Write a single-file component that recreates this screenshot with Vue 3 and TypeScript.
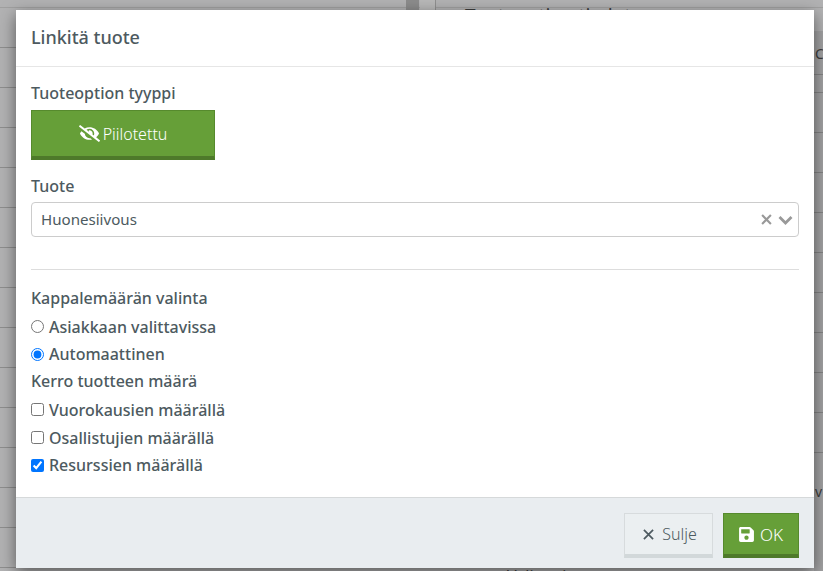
<script setup lang="ts">
const leftLines = [47, 87, 127, 167, 207, 247, 287, 327, 367, 407, 447, 487, 527, 567]
const rightLines = [74, 92, 132, 172, 212, 252, 292, 332, 372, 412, 452]
</script>

<template>
  <div class="page">
    <div class="backdrop" aria-hidden="true">
      <i class="top-line"></i>
      <i class="top-block"></i>
      <i class="top-block-light"></i>
      <i class="top-vline"></i>
      <i class="right-band"></i>
      <i v-for="y in leftLines" :key="y" class="left-line" :style="{ top: y + 'px' }"></i>
      <i v-for="y in rightLines" :key="'r' + y" class="right-line" :style="{ top: y + 'px' }"></i>
      <span class="behind b1">Tuoteoption tiedot</span>
      <span class="behind b2">Ca</span>
      <span class="behind b3">v</span>
      <span class="behind b4">Valinnainen</span>
    </div>
    <section class="modal">
      <header class="modal-head">
        <h2>Linkitä tuote</h2>
      </header>
      <div class="modal-body">
        <label class="label">Tuoteoption tyyppi</label>
        <button class="btn btn-green btn-type">
          <svg class="eye" viewBox="0 0 640 512" width="21" height="17"><path fill="currentColor" d="M320 400c-75.85 0-137.25-58.71-142.9-133.11L72.2 185.82c-13.79 17.3-26.48 35.59-36.72 55.59a32.35 32.35 0 0 0 0 29.19C89.71 376.41 197.07 448 320 448c26.91 0 52.87-4 77.89-10.46L346 397.39a144.13 144.13 0 0 1-26 2.61zm313.82 58.1l-110.55-85.44a331.25 331.25 0 0 0 81.25-102.07 32.35 32.35 0 0 0 0-29.19C550.29 135.59 442.93 64 320 64a308.15 308.15 0 0 0-147.32 37.7L45.46 3.37A16 16 0 0 0 23 6.18L3.37 31.45A16 16 0 0 0 6.18 53.9l588.36 454.73a16 16 0 0 0 22.46-2.81l19.64-25.27a16 16 0 0 0-2.82-22.45zm-183.72-142l-39.3-30.38A94.75 94.75 0 0 0 416 256a94.76 94.76 0 0 0-121.31-92.21A47.65 47.65 0 0 1 304 192a46.64 46.64 0 0 1-1.54 10l-73.61-56.89A142.31 142.31 0 0 1 320 112a143.92 143.92 0 0 1 144 144c0 21.63-5.29 41.79-13.9 60.11z"/></svg>
          <span>Piilotettu</span>
        </button>
        <label class="label label-product">Tuote</label>
        <div class="select">
          <span class="select-value">Huonesiivous</span>
          <span class="select-clear">
            <svg viewBox="0 0 12 12" width="11" height="11"><path d="M1.2 1.2l9.6 9.6M10.8 1.2l-9.6 9.6" stroke="currentColor" stroke-width="2.3" fill="none"/></svg>
          </span>
          <span class="select-arrow">
            <svg viewBox="0 0 15 10" width="15" height="10"><path d="M1.5 2L7.5 8l6-6" stroke="currentColor" stroke-width="2.8" fill="none"/></svg>
          </span>
        </div>
        <hr class="divider" />
        <div class="label row-label">Kappalemäärän valinta</div>
        <label class="check"><input type="radio" name="qty" /> <span>Asiakkaan valittavissa</span></label>
        <label class="check"><input type="radio" name="qty" checked /> <span>Automaattinen</span></label>
        <div class="label row-label">Kerro tuotteen määrä</div>
        <label class="check"><input type="checkbox" /> <span>Vuorokausien määrällä</span></label>
        <label class="check"><input type="checkbox" /> <span>Osallistujien määrällä</span></label>
        <label class="check"><input type="checkbox" checked /> <span>Resurssien määrällä</span></label>
      </div>
      <footer class="modal-foot">
        <button class="btn btn-light">
          <svg viewBox="0 0 12 12" width="11" height="11"><path d="M1 1l10 10M11 1L1 11" stroke="currentColor" stroke-width="1.9" fill="none"/></svg>
          <span>Sulje</span>
        </button>
        <button class="btn btn-green btn-ok">
          <svg viewBox="0 0 448 512" width="15" height="17"><path fill="currentColor" d="M433.94 129.94l-83.88-83.88A48 48 0 0 0 316.12 32H48C21.49 32 0 53.49 0 80v352c0 26.51 21.49 48 48 48h352c26.51 0 48-21.49 48-48V163.88a48 48 0 0 0-14.06-33.94zM224 416c-35.35 0-64-28.65-64-64 0-35.35 28.65-64 64-64s64 28.65 64 64c0 35.35-28.65 64-64 64zm96-304.52V212c0 6.63-5.37 12-12 12H76c-6.63 0-12-5.37-12-12V108c0-6.63 5.37-12 12-12h228.52c3.18 0 6.23 1.26 8.48 3.52l3.48 3.48A12 12 0 0 1 320 111.48z"/></svg>
          <span>OK</span>
        </button>
      </footer>
    </section>
  </div>
</template>

<style>
html, body { margin: 0; height: 100%; overflow: hidden; }
</style>

<style scoped>
.page {
  position: relative;
  width: 823px;
  height: 571px;
  overflow: hidden;
  background: #b2b2b3;
  box-sizing: border-box;
  padding: 10px 9px 3px 16px;
  font-family: "Noto Sans", "Open Sans", sans-serif;
  color: #4d5a60;
}
.backdrop { position: absolute; inset: 0; }
.top-line { position: absolute; left: 0; right: 0; top: 7px; height: 1px; background: #a0a0a0; }
.top-block { position: absolute; left: 406px; top: 0; width: 13px; height: 10px; background: #8c8c8c; }
.top-block-light { position: absolute; left: 420px; top: 0; width: 15px; height: 10px; background: #b8b8b8; }
.top-vline { position: absolute; left: 435px; top: 0; width: 1px; height: 10px; background: #8f8f8f; }
.right-band { position: absolute; right: 0; top: 31px; width: 9px; bottom: 0; background: #a3a3a4; }
.left-line { position: absolute; left: 0; width: 16px; height: 1px; background: #8e8e8e; }
.right-line { position: absolute; right: 0; width: 9px; height: 1px; background: #858585; }
.behind { position: absolute; color: #3d3d3d; white-space: nowrap; }
.b1 { left: 465px; top: 3px; font-size: 19px; line-height: 26px; }
.b2 { left: 815px; top: 44px; font-size: 14px; }
.b3 { left: 815px; top: 482px; font-size: 14px; }
.b4 { left: 507px; top: 566px; font-size: 16px; line-height: 20px; }
.modal {
  position: relative;
  height: 558px;
  background: #fff;
  display: flex;
  flex-direction: column;
  box-shadow: 0 5px 15px rgba(0, 0, 0, 0.5);
}
.modal-head {
  box-sizing: content-box;
  height: 54px;
  padding: 0 15px 2px;
  border-bottom: 1px solid #e6e6e6;
  display: flex;
  align-items: center;
}
h2 { margin: 0; font-size: 18px; font-weight: 500; line-height: 24px; }
.modal-body { flex: 1; padding: 15px 15px 0; font-size: 15px; }
.label { display: block; font-weight: 500; font-size: 16px; line-height: 22px; }
.btn {
  box-sizing: border-box;
  display: flex;
  align-items: center;
  justify-content: center;
  font-family: inherit;
  font-size: 16px;
  font-weight: 300;
  cursor: pointer;
  padding: 0;
}
.btn-green {
  background: #669f38;
  color: #fff;
  border: 1px solid #568a2d;
  border-bottom: 4px solid #4e7a2a;
}
.btn-type { width: 184px; height: 50px; margin-top: 6px; gap: 3px; }
.label-product { margin-top: 15px; }
.select {
  box-sizing: border-box;
  height: 35px;
  margin-top: 5px;
  border: 1px solid #ccc;
  border-radius: 4px;
  display: flex;
  align-items: center;
  padding-left: 9px;
  color: #4d5a60;
  line-height: 32px;
}
.select-value { flex: 1; font-size: 15.1px; font-weight: 400; margin-top: -2px; }
.select-clear { color: #999; display: flex; margin-right: 6px; }
.select-arrow { color: #999; display: flex; margin-right: 5px; }
.divider { border: 0; border-top: 1px solid #ddd; margin: 32px 0 15px; }
.row-label { line-height: 27.75px; height: 27.75px; }
.check {
  display: flex;
  align-items: center;
  height: 27.75px;
  gap: 5px;
  font-weight: 500;
  font-size: 16px;
}
.check input { margin: 0; width: 13px; height: 13px; accent-color: #0075ff; }
.modal-foot {
  box-sizing: border-box;
  height: 71px;
  background: #e9edf0;
  border-top: 1px solid #d6d9da;
  display: flex;
  justify-content: flex-end;
  align-items: flex-start;
  gap: 10px;
  padding: 15px 15px 0;
}
.btn-light {
  width: 89px;
  height: 45px;
  gap: 8px;
  padding-left: 3px;
  background: #ebeff1;
  color: #4d5a60;
  border: 1px solid #d7dbdd;
  border-bottom: 4px solid #d2d8da;
}
.btn-ok { width: 76px; height: 45px; gap: 6px; font-size: 17px; }
</style>
